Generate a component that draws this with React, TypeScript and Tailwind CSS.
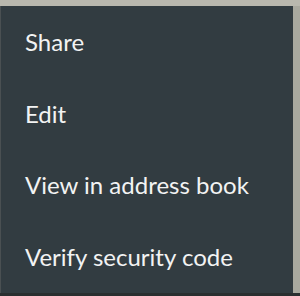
export default function App() {
  const items = ['Share', 'Edit', 'View in address book', 'Verify security code']

  return (
    <div className="w-[300px] h-[296px] bg-[#a9a99f] flex flex-col overflow-hidden">
      {/* backdrop peeking above the menu */}
      <div className="h-[6px] bg-[#b9b8ae] shrink-0" />
      <div className="flex flex-1 min-h-0">
        <div className="w-[1px] bg-[#4a5052]" />
        <ul className="w-[292px] bg-[#323c41] flex flex-col">
          {items.map((item) => (
            <li
              key={item}
              className="h-[72px] flex items-center pl-[24px] text-[24px] text-[#f2f3f3] font-['Lato',sans-serif]"
            >
              {item}
            </li>
          ))}
        </ul>
        <div className="flex-1 bg-[#a9a99f]" />
      </div>
      <div className="h-[3px] bg-[#2a2f30] shrink-0" />
    </div>
  )
}
